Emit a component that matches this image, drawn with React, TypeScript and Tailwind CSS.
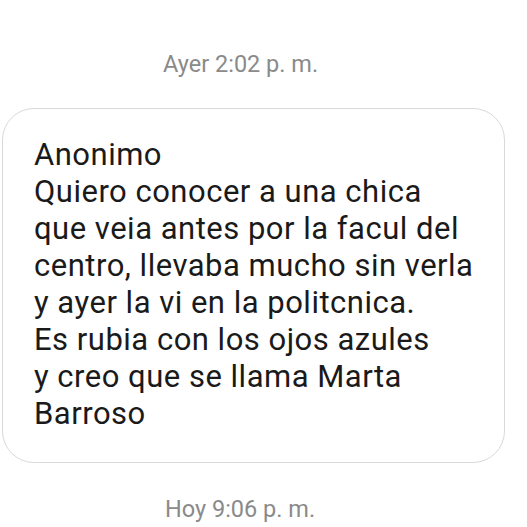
export default function App() {
  const lines = [
    "Anonimo",
    "Quiero conocer a una chica",
    "que veia antes por la facul del",
    "centro, llevaba mucho sin verla",
    "y ayer la vi en la politcnica.",
    "Es rubia con los ojos azules",
    "y creo que se llama Marta",
    "Barroso",
  ];
  return (
    <div className="w-[527px] h-[527px] bg-white overflow-hidden font-['Roboto',sans-serif]">
      <div className="pt-[50px] pl-[163px] text-[23.5px] leading-[28px] text-[#8a8a8a] whitespace-nowrap">Ayer 2:02 p. m.</div>
      <div className="mt-[30px] ml-[2px] w-[503px] h-[355px] rounded-[32px] border border-[#d9d9d9] pl-[31px] pt-[27px]">
        {lines.map((l) => (
          <div key={l} className="text-[31px] leading-[37px] tracking-[0.5px] text-[#1a1a1a] whitespace-nowrap">{l}</div>
        ))}
      </div>
      <div className="mt-[32px] pl-[165px] text-[23.5px] leading-[28px] text-[#8a8a8a] whitespace-nowrap">Hoy 9:06 p. m.</div>
    </div>
  );
}
